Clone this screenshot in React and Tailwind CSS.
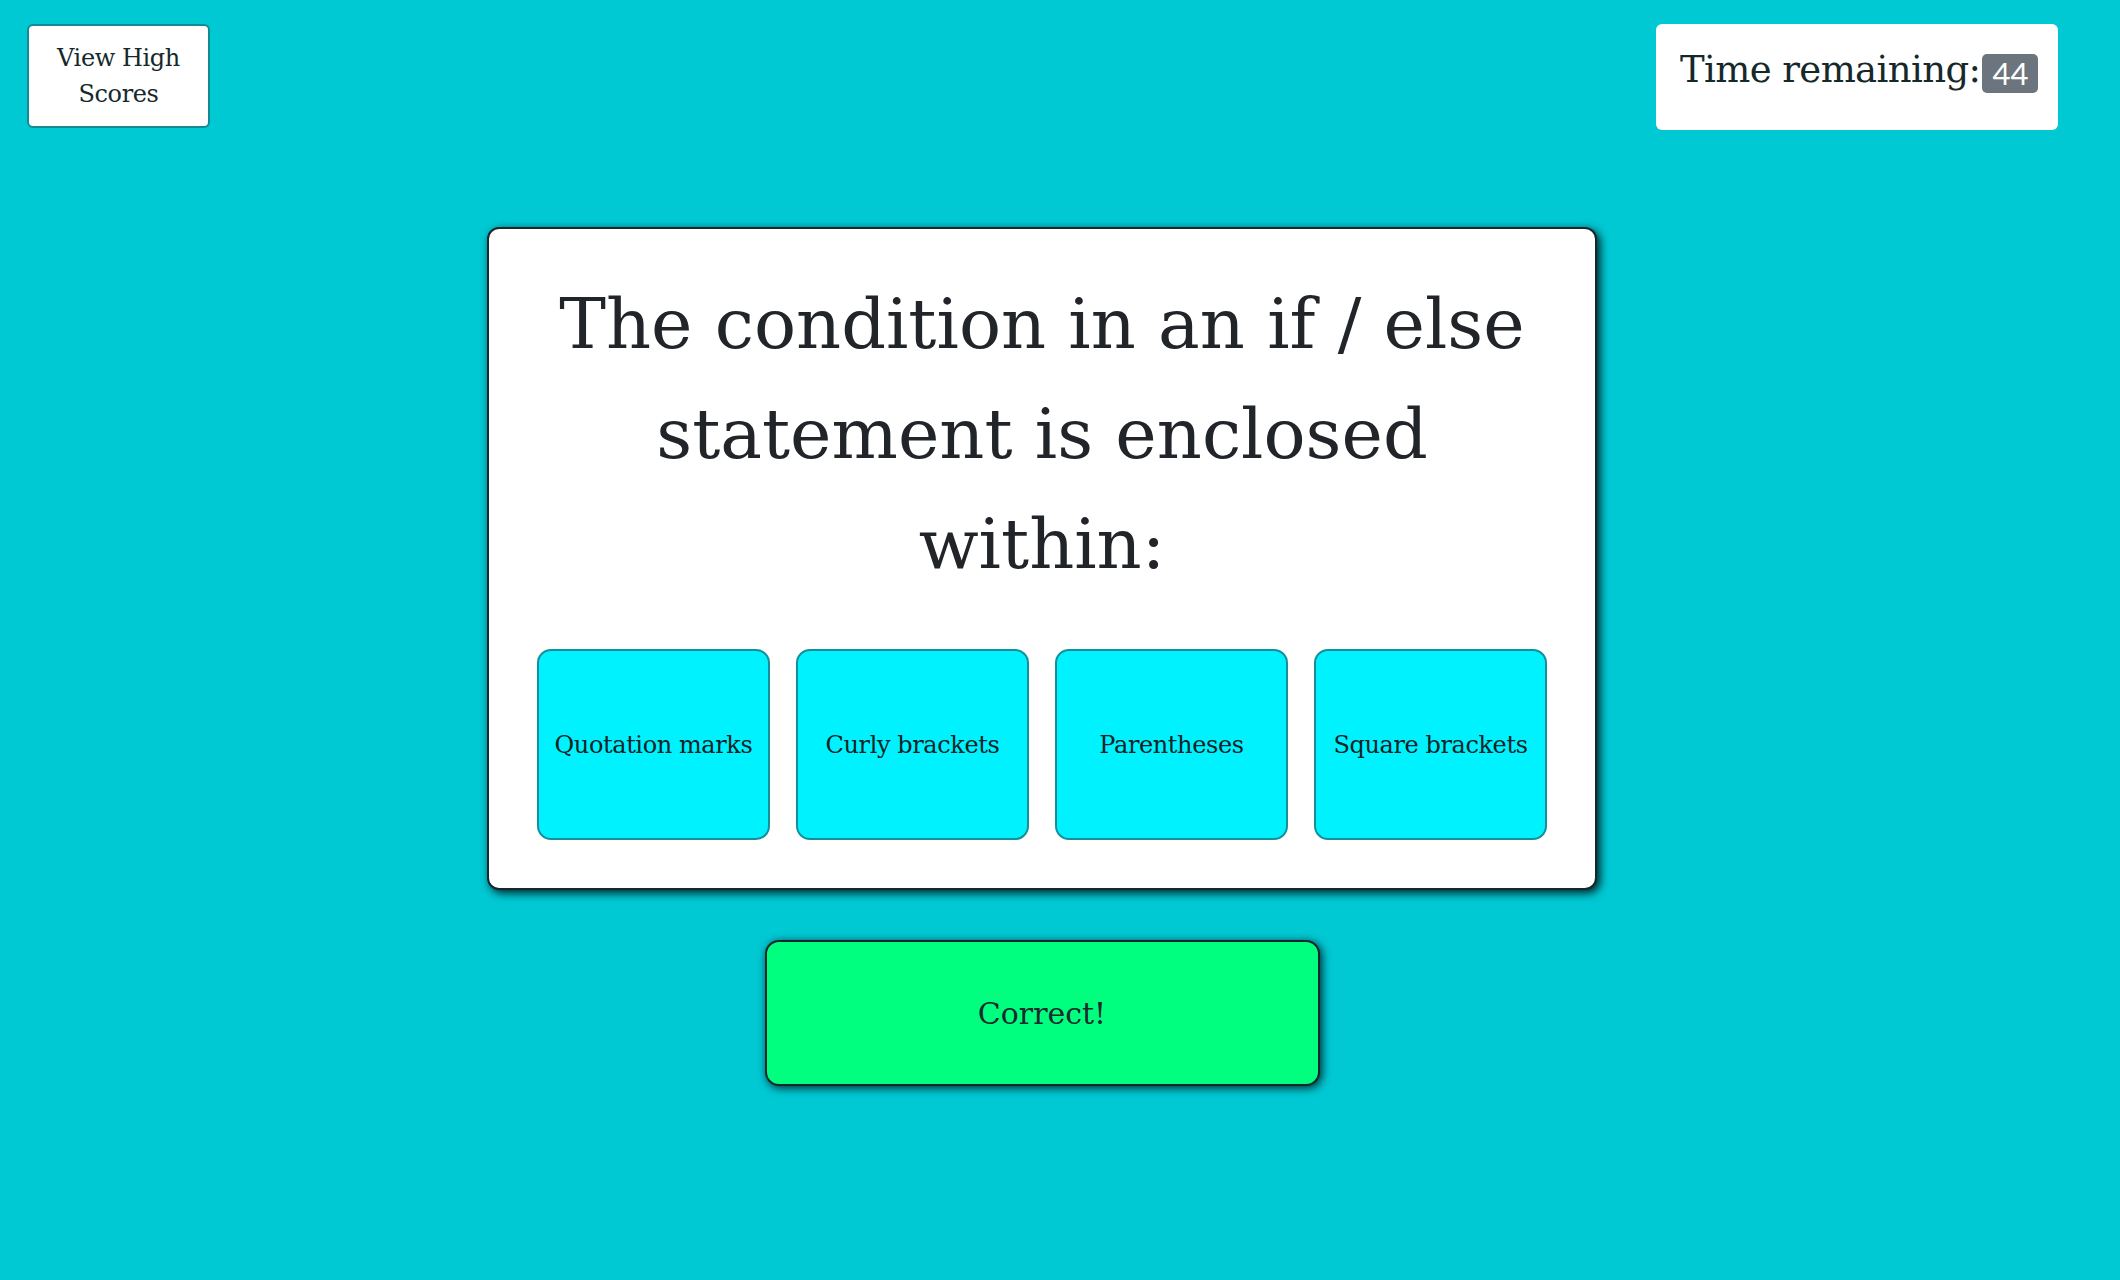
import React from 'react';

const answers = ['Quotation marks', 'Curly brackets', 'Parentheses', 'Square brackets'];

export default function App() {
  return (
    <div className="min-h-[1280px] w-full bg-[#00c9d4] text-[#212529] font-['DejaVu_Serif',serif]">
      {/* Top bar */}
      <header className="flex items-start justify-between pt-[24px] pl-[27px] pr-[62px]">
        <button className="w-[183px] h-[104px] bg-white border-2 border-[#148a93] rounded-[6px] text-[24px] leading-[36px] text-[#15292b] tracking-[-0.4px]">
          View High
          <br />
          Scores
        </button>

        <div className="w-[402px] h-[106px] bg-white rounded-[6px] pl-[24px] pt-[22px]">
          <h2 className="flex items-center text-[37px] leading-[48px] text-[#15292b] tracking-[-0.6px]">
            Time remaining:
            <span className="ml-[2px] mt-[6px] inline-flex items-center justify-center w-[56px] h-[39px] rounded-[5px] bg-[#6c757d] text-white text-[31px] font-['Lato',sans-serif] tracking-normal">
              44
            </span>
          </h2>
        </div>
      </header>

      {/* Quiz */}
      <main className="flex flex-col items-center pr-[36px] pt-[97px]">
        <section className="w-[1110px] bg-white border-2 border-[#16262a] rounded-[12px] shadow-[3px_3px_10px_rgba(0,0,0,0.85)] px-[48px] pt-[40px] pb-[48px]">
          <h1 className="text-center text-[70px] leading-[110px] text-[#212529]">
            The condition in an if / else
            <br />
            statement is enclosed
            <br />
            within:
          </h1>

          <div className="grid grid-cols-4 gap-[26px] mt-[50px]">
            {answers.map((a) => (
              <button
                key={a}
                className="h-[191px] bg-[#00f2ff] border-2 border-[#15909a] rounded-[14px] text-[24px] text-[#0f2426] tracking-[-0.4px]"
              >
                {a}
              </button>
            ))}
          </div>
        </section>

        <div className="mt-[50px] w-[555px] h-[146px] flex items-center justify-center bg-[#00ff7f] border-2 border-[#16262a] rounded-[14px] shadow-[2px_2px_10px_rgba(0,0,0,0.8)] text-[30px] text-[#1b2a2c]">
          Correct!
        </div>
      </main>
    </div>
  );
}
